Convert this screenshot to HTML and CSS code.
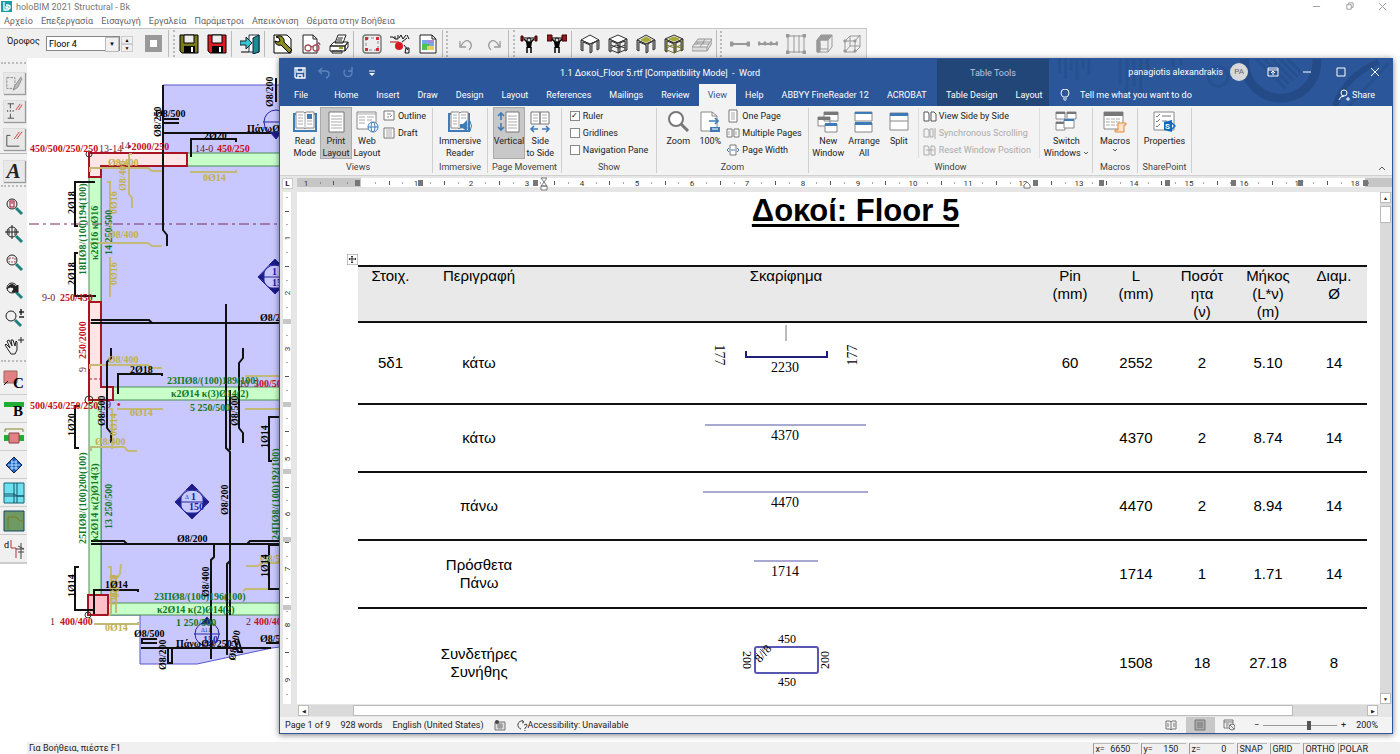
FILE: index.html
```html
<!DOCTYPE html>
<html lang="el">
<head>
  <meta charset="UTF-8" />
  <meta name="viewport" content="width=device-width, initial-scale=1.0"/>
  <title>holoBIM 2021 Structural - Bk</title>
  <link rel="stylesheet" href="styles.css">
</head>
<body>
  <div class="app">
    <div class="app-title">
      <svg class="app-logo" viewBox="0 0 11 11"><rect width="11" height="11" fill="#13a0a6"/><path d="M3 1v8h4l2-2V5L7 4H5M5 6h2v1H5z" fill="none" stroke="#fff" stroke-width="1.3"/></svg>
      <span>holoBIM 2021 Structural - Bk</span>
      <div class="app-controls">
        <button aria-label="Minimize"><svg viewBox="0 0 10 10"><path d="M1 5h8"/></svg></button>
        <button aria-label="Restore"><svg viewBox="0 0 10 10"><path d="M2 3h5v5H2zM4 3V1h5v5H7"/></svg></button>
        <button aria-label="Close"><svg viewBox="0 0 10 10"><path d="M1 1l8 8M9 1L1 9"/></svg></button>
      </div>
    </div>
    <nav class="app-menu">
      <a href="#">Αρχείο</a><a href="#">Επεξεργασία</a><a href="#">Εισαγωγή</a><a href="#">Εργαλεία</a><a href="#">Παράμετροι</a><a href="#">Απεικόνιση</a><a href="#">Θέματα στην Βοήθεια</a>
    </nav>

    <div class="toolbar">
      <div class="floor-box">
        <label for="floor">Όροφος</label>
        <span class="drop"><select id="floor"><option>Floor 4</option></select></span>
        <div class="spin"><button aria-label="Up">▲</button><button aria-label="Down">▼</button></div>
        <button class="grey-btn" aria-label="Stop"></button>
      </div>
      <i class="grip"></i>
      <button aria-label="Save"><svg viewBox="0 0 20 20"><path d="M1 1h18v18H3l-2-2z" fill="#7b7b1c" stroke="#000"/><path d="M5 1h10v8H5z" fill="#eee" stroke="#000"/><path d="M5 12h11v7H5z"/><path d="M12 13h2v5h-2z" fill="#fff"/></svg></button>
      <button aria-label="Save copy"><svg viewBox="0 0 20 20"><path d="M1 1h18v18H3l-2-2z" fill="#e01c24" stroke="#000"/><path d="M5 1h10v8H5z" fill="#eee" stroke="#000"/><path d="M5 12h11v7H5z"/><path d="M12 13h2v5h-2z" fill="#fff"/></svg></button>
      <i class="sep"></i>
      <button aria-label="Exit"><svg viewBox="0 0 20 20"><path d="M9 1h10v17H9z" fill="#fff" stroke="#234"/><path d="M13 4l6-3v17l-6 2z" fill="#1a8c94" stroke="#123"/><path d="M0 7h6V3l6 6-6 6v-4H0z" fill="#3cc3cf" stroke="#123"/><path d="M1 18h8" stroke="#000"/></svg></button>
      <i class="sep"></i>
      <button aria-label="Settings"><svg viewBox="0 0 20 20"><path d="M1 1h13l4 4v14H1z" fill="#fff" stroke="#000"/><path d="M3 3l3 1 1 3-2 1-3-1c0 3 3 5 6 4l8 8 3-3-8-8C12 5 9 1 5 2z" fill="#8b8b25" stroke="#000"/></svg></button>
      <button aria-label="Preview"><svg viewBox="0 0 20 20"><path d="M2 1h10l4 4v14H2z" fill="#fff" stroke="#222"/><path d="M12 1v4h4" fill="none" stroke="#222"/><g fill="none" stroke="#a2505c" stroke-width="1.3"><circle cx="7" cy="14" r="3"/><circle cx="15" cy="14" r="3"/><path d="M10 13q1-1 2 0M15 11q3-4 4 0"/></g></svg></button>
      <button aria-label="Print"><svg viewBox="0 0 20 20" fill="#fff" stroke="#222"><path d="M1 12l4-4h14l-3 4zM1 12h15v5H1zM16 12l3-4v5l-3 4zM6 9l3-8h8l-3 8zM3 17h10v2H3z"/><path d="M9 4h5M8 6h5"/><path d="M10 14h4" stroke="#a9a31c" stroke-width="2"/></svg></button>
      <i class="sep"></i>
      <button aria-label="Section"><svg viewBox="0 0 20 20"><rect x="1" y="1" width="18" height="18" rx="3" fill="#eee" stroke="#777" stroke-width="1.4"/><rect x="4" y="4" width="12" height="12" fill="none" stroke="#888" stroke-dasharray="3 2"/><path d="M3 3h3v3H3zM14 3h3v3h-3zM3 14h3v3H3zM14 14h3v3h-3z" fill="#d32d3b"/></svg></button>
      <button aria-label="Symbols"><svg viewBox="0 0 20 20"><path d="M0 8h9" stroke="#c00"/><path d="M0 3h3l2 2M5 2v3h3V1M9 4l2-3 2 4 3-4M17 1l2 4M14 11l4 5M16 14h3v5h-4zM12 8l5-4" fill="none" stroke="#111"/><circle cx="9" cy="12" r="4" fill="#d91822"/></svg></button>
      <button aria-label="Picture"><svg viewBox="0 0 20 20"><path d="M2 1h12l4 4v14H2z" fill="#fff" stroke="#222"/><path d="M14 1v4h4" fill="none" stroke="#222"/><path d="M4 6h12v10H4z" fill="#75a7e4"/><path d="M4 10h7v6H4z" fill="#4bc256"/><path d="M9 12h7v4H9z" fill="#eccf59"/><path d="M10 6h6v3h-6z" fill="#a58be0"/></svg></button>
      <i class="grip wide"></i>
      <button aria-label="Undo"><svg viewBox="0 0 20 20" fill="none" stroke="#999" stroke-width="1.3"><path d="M5 12Q9 4 14 8q3 4-1 8M4 7v6h6"/></svg></button>
      <button aria-label="Redo"><svg viewBox="0 0 20 20" fill="none" stroke="#999" stroke-width="1.3"><path d="M15 12Q11 4 6 8q-3 4 1 8M16 7v6h-6"/></svg></button>
      <i class="grip"></i>
      <button aria-label="Analysis"><svg viewBox="0 0 20 20"><path d="M2 4h16" stroke="#000"/><path d="M2 2h2v5H2zM16 2h2v5h-2z" fill="#7b1c22" stroke="#400"/><path d="M5 5l4 4M15 5l-4 4M8 13v6M12 13v6" stroke="#000" stroke-width="1.5"/><path d="M7 8h6l-1 6H8z"/><circle cx="10" cy="6" r="2" fill="#ddd" stroke="#000"/></svg></button>
      <button aria-label="Heavy analysis"><svg viewBox="0 0 20 20"><path d="M0 4h20" stroke="#000"/><path d="M0 1h5v6H0zM15 1h5v6h-5z" fill="#8b1c22" stroke="#400"/><path d="M5 5l4 4M15 5l-4 4M8 13v6M12 13v6" stroke="#000" stroke-width="1.5"/><path d="M7 8h6l-1 6H8z"/><circle cx="10" cy="6" r="2" fill="#ddd" stroke="#000"/></svg></button>
      <i class="sep"></i>
      <button aria-label="Frame"><svg viewBox="0 0 20 20" class="cube"><path d="M1 6l9-5 9 5-9 4z" fill="#fff"/><path d="M1 6v10l2 1V8l7 3v8l2-1v-8l5-3v9l2-1V6l-9 4z" fill="#aaa"/></svg></button>
      <button aria-label="Storeys"><svg viewBox="0 0 20 20" class="cube"><path d="M1 5l9-4 9 4-9 4z" fill="#fff"/><path d="M1 5v12l2 1V7l7 3v9l2-1V9l5-2v10l2-1V5l-9 4z" fill="#aaa"/><path d="M3 11l7 3 7-3M3 16l7 3 7-3M3 14l5-3 9 3"/></svg></button>
      <button aria-label="Slab frame"><svg viewBox="0 0 20 20" class="cube"><path d="M1 6l9-5 9 5-9 4z" fill="#ddd"/><path d="M5 6l5-3 5 3-5 2z" fill="#a6a832" stroke="#a6a832"/><path d="M1 6v10l2 1V8l7 3v8l2-1v-8l5-3v9l2-1V6l-9 4z" fill="#aaa"/></svg></button>
      <button aria-label="Slab storeys"><svg viewBox="0 0 20 20" class="cube"><path d="M1 5l9-4 9 4-9 4z" fill="#ddd"/><path d="M5 5l5-2 5 2-5 2z" fill="#a6a832" stroke="#a6a832"/><path d="M1 5v12l2 1V7l7 3v9l2-1V9l5-2v10l2-1V5l-9 4z" fill="#aaa84f"/><path d="M3 11l7 3 7-3M3 16l7 3 7-3M3 14l5-3 9 3" stroke="#77762a"/></svg></button>
      <button aria-label="Foundation"><svg viewBox="0 0 20 20" fill="#ddd" stroke="#999"><path d="M0 13L6 5h14l-5 8zM0 13v4h15l5-8V5M15 13v4M2 10h15M4 8h14M8 13l5-8M5 10l1-2M11 10l1-2"/></svg></button>
      <i class="grip wide"></i>
      <button aria-label="Beam"><svg viewBox="0 0 20 20" class="dim"><path d="M1 10h18" stroke-width="2"/><path d="M0 8h3v4H0zM17 8h3v4h-3z" fill="#999"/></svg></button>
      <button aria-label="Split beam"><svg viewBox="0 0 20 20" class="dim"><path d="M1 10h18" stroke-width="2"/><path d="M0 8h2v3H0zM6 8h2v3H6zM12 8h2v3h-2zM18 8h2v3h-2z" fill="#999"/></svg></button>
      <button aria-label="Bays"><svg viewBox="0 0 20 20" class="dim"><path d="M1 2h18M1 18h18M2 1v18M8 1v18M13 1v18M18 1v18"/><path d="M0 0h3v3H0zM17 0h3v3h-3zM0 17h3v3H0zM17 17h3v3h-3z" fill="#999"/></svg></button>
      <button aria-label="Solid"><svg viewBox="0 0 20 20" class="dim"><path d="M3 6h11v12H3zM14 6l4-5v12l-4 5M6 9v6h8"/><path d="M3 6l4-5h11l-4 5zM3 6h3v12H3z" fill="#999"/></svg></button>
      <button aria-label="Wire"><svg viewBox="0 0 20 20" class="dim"><path d="M3 7h10v11H3zM13 7l5-6v12l-5 5M3 7l5-5h10M8 2v10l-5 6M8 12h10"/><path d="M2 6h2v2H2zM12 6h2v2h-2zM2 16h2v2H2zM12 16h2v2h-2z" fill="#999"/></svg></button>
    </div>

    <div class="work">
      <div class="side-tools">
        <i class="hgrip"></i>
        <button class="raised" aria-label="Edit element"><svg viewBox="0 0 20 20" fill="none" stroke="#888"><path d="M2 4h9v12H2z" stroke-dasharray="3 1"/><path d="M18 3l-7 10-2 5 5-3 5-10" fill="#bbb"/></svg></button>
        <button class="raised" aria-label="Edit dimension"><svg viewBox="0 0 20 20" fill="none" stroke="#444"><path d="M3 2h7M6 2v5M3 18h7M6 13v5M3 9v2M6 9v2M9 9v2"/><path d="M12 9l5-7M15 9l4-6" stroke="#c33"/></svg></button>
        <button class="raised" aria-label="Edit line"><svg viewBox="0 0 20 20" fill="none" stroke="#444"><path d="M2 6v12h14M2 6h4"/><path d="M10 10l6-8M13 10l6-8" stroke="#c33"/></svg></button>
        <i class="hsep"></i>
        <button class="raised letter" aria-label="Text"><b>A</b></button>
        <i class="hgrip"></i>
        <button aria-label="Zoom page"><svg viewBox="0 0 20 20" class="lens"><path d="M12 12l6 6" class="handle"/><circle cx="8" cy="8" r="5"/><path d="M6 5h4v6H6zM7 7h2" stroke="#a02"/></svg></button>
        <button aria-label="Zoom all"><svg viewBox="0 0 20 20" class="lens"><path d="M12 12l6 6" class="handle"/><circle cx="8" cy="8" r="5"/><path d="M1 8h14M8 1v14M5 5v6M11 5v6" /></svg></button>
        <button aria-label="Zoom window"><svg viewBox="0 0 20 20" class="lens"><path d="M12 12l6 6" class="handle"/><circle cx="8" cy="8" r="5"/><path d="M5 6h6v4H5z" stroke="#a56" stroke-dasharray="2 1"/></svg></button>
        <button aria-label="Zoom previous"><svg viewBox="0 0 20 20" class="lens"><path d="M12 12l6 6" class="handle"/><circle cx="8" cy="8" r="5"/><path d="M3 9q4-8 9-2l2-2v7H8l2-3Q7 5 3 9" fill="#222"/></svg></button>
        <button aria-label="Zoom in or out"><svg viewBox="0 0 20 20" class="lens"><path d="M11 12l6 6" class="handle"/><circle cx="7" cy="8" r="5"/><path d="M15 4h5M17 1v6M15 9h5" stroke-width="1.5"/></svg></button>
        <button aria-label="Pan"><svg viewBox="0 0 20 20" class="lens"><path d="M3 12l-2-3 1-1 4 4-3-7 2-1 3 6-1-6h2l2 6 1-5 1 1v8l-2 4H7zM14 4h6M17 1v6"/></svg></button>
        <i class="hgrip"></i>
        <button class="flat" aria-label="Column"><svg viewBox="0 0 20 20"><path d="M0 0h13v12H0z" fill="#e28084" stroke="#965"/><path d="M0 14l4-4" stroke="#000"/><text x="9" y="17" class="tool-letter">C</text></svg></button>
        <button class="flat" aria-label="Beam tool"><svg viewBox="0 0 20 20"><path d="M0 3h20v5H0z" fill="#1fae33"/><text x="9" y="17" class="tool-letter">B</text></svg></button>
        <button class="flat" aria-label="Joint"><svg viewBox="0 0 20 20"><path d="M1 5V2h18v3" fill="none" stroke="#88852c"/><path d="M0 8h20v6H0z" fill="#1fae33"/><path d="M5 6h10v10H5z" fill="#e28084" stroke="#844"/></svg></button>
        <button class="flat" aria-label="Slab"><svg viewBox="0 0 20 20"><path d="M10 2l8 8-8 8-8-8z" fill="#1c63c4" stroke="#124"/><path d="M7 7h6M6 13h8M8 5v10M12 5v10M4 10h12" stroke="#b9dcff"/></svg></button>
        <button class="flat" aria-label="Grid"><svg viewBox="0 0 20 20"><path d="M0 0h20v20H0z" fill="#6fe0ef" stroke="#167"/><path d="M10 0v20M13 0v20M0 11h10l3 2h7M0 13h20" fill="none" stroke="#156"/></svg></button>
        <button class="flat" aria-label="Outline"><svg viewBox="0 0 20 20"><path d="M0 0h20v20H0z" fill="#6f9a64" stroke="#146"/><path d="M4 18V6h8l4 4h4" fill="none" stroke="#7b7a1e"/></svg></button>
        <button class="flat" aria-label="Levels"><svg viewBox="0 0 20 20"><text x="0" y="9" font-size="9">d</text><path d="M7 1v8h5v10" fill="none" stroke="#b33"/><path d="M12 10h8M17 4v16M14 7l6 3M14 13h6" fill="none" stroke="#444"/></svg></button>
      </div>

      <!-- floor plan -->
      <div class="plan">
        <svg viewBox="27 58 260 684" width="260" height="684">
          <path class="slab" d="M163 85H288V646L272 648 197 664H140V615H101V166H163z"/>
          <path class="beam" d="M187 153h101v13H187zM89 177h12v424H89zM113 387h175v13H113zM108 603h180v12H108z"/>
          <path class="wall" d="M89 153h98v13h-86v11H89zM89 302h12v85h12v13H89z"/>
          <path d="M89 323h12M89 379h12" stroke="#a02030" stroke-dasharray="3 2"/>
          <path class="col" d="M88 595h20v20H88z"/>
          <path d="M29 224H288" stroke="#7a2c5c" stroke-dasharray="10 4 3 4"/>
          <g class="mark"><circle cx="89" cy="154" r="3"/><circle cx="89" cy="400" r="4"/><circle cx="88" cy="615" r="3"/></g>
          <path class="soft" d="M90 172v-4h58l4 3h10M129 154h3M129 154v40l3 4v10M191 171v1h45v-2M107 182h3v47M90 243h58l4 3h10M110 257v40M90 369v-4h58l4 3h10M91 451v-4h33l4 4h9M109 409h3v40M117 409h46M94 624h44v-2M108 567h3v46l-2 3M121 564l-1 10-4 4v35M245 376h35M245 409h35M246 566h12l4-3h20M243 591l3-2h35"/>
          <path class="bar" d="M163 85V230l4 5v11M163 133H288M163 119h16M163 123h16M276 78v24M191 157v-18h45v3M95 182H75v44h3M78 253h-3v43h21M79 406h-4v42h4M79 567h-4v43h20M94 614v-24h44v2M91 323H288M91 320h58l3 3M226 304v144l4 4v163M230 390v60M111 348v10l-4 4v66l4 5v10M243 348v10l-4 5v65l4 5v10M118 394v-20h44v2M280 417h-11v44h3M91 544H288M91 541h33l3 3M247 544l3-3h32M282 545h-13v44h13M214 545v12l-3 3v99M230 561l-3 3v91M141 648h130M157 639h-15v4h15M168 649v14h4v-14M235 640l3 12h4l-4-13M266 643h20"/>

          <g class="section"><path d="M192 484l17 18-17 17-17-17z"/><circle cx="192" cy="502" r="12"/><path d="M175 502h34"/><path class="fill" d="M192 484l6 6h-12zM175 502l6-5v10zM209 502l-6-5v10zM192 519l-6-6h12z"/></g>
          <g class="section"><path d="M275 259l17 18-17 17-17-17z"/><circle cx="275" cy="277" r="12"/><path d="M258 277h34"/><path class="fill" d="M275 259l6 6h-12zM258 277l6-5v10zM275 294l-6-6h12z"/></g>
          <g class="section"><circle cx="207" cy="634" r="12"/><path d="M194 634h26"/><path class="fill" d="M207 617l6 7h-12z"/></g>
          <g class="section"><circle cx="276" cy="122" r="12"/><path d="M263 122h26"/><path class="fill" d="M276 139l-6-7h12z"/></g>

          <g class="t red">
            <text x="30" y="152">450/500/250/250</text><text x="128" y="150">•2000/250</text><text x="217" y="152">450/250</text>
            <text x="60" y="301">250/450</text><text x="30" y="409">500/450/250/250</text><text x="117" y="408">•</text><text x="254" y="387">500/500</text>
            <text x="60" y="625">400/400</text><text x="254" y="625">400/400</text>
            <text transform="translate(86 359) rotate(-90)">250/2000</text>
          </g>
          <g class="t thin">
            <text x="99" y="152">13-14</text><text x="120" y="149">14</text><text x="195" y="152">14-0</text><text x="42" y="301">9-0</text><text x="106" y="408">9</text><text x="239" y="387">10</text><text x="50" y="625">1</text><text x="246" y="625">2</text>
            <text transform="translate(86 372) rotate(-90)">9</text>
          </g>
          <g class="t green">
            <text x="167" y="384">23ΠØ8/(100)189(100)</text><text x="171" y="397">κ2Ø14 κ(3)Ø14(2)</text><text x="190" y="411">5 250/500</text>
            <text x="154" y="600">23ΠØ8/(100)196(100)</text><text x="157" y="613">κ2Ø14 κ(2)Ø14(2)</text><text x="176" y="626">1 250/500</text>
            <text transform="translate(86 275) rotate(-90)">18ΠØ8/(100)194(100)</text>
            <text transform="translate(98 260) rotate(-90)">κ2Ø16 κØ16</text>
            <text transform="translate(112 255) rotate(-90)">14 250/500</text>
            <text transform="translate(86 544) rotate(-90)">25ΠØ8/(100)200(100)</text>
            <text transform="translate(98 541) rotate(-90)">κ2Ø14 κ(2)Ø14(3)</text>
            <text transform="translate(112 529) rotate(-90)">13 250/500</text>
            <text transform="translate(279 540) rotate(-90)">24ΠØ8/(100)192(100)</text>
          </g>
          <g class="t yellow">
            <text x="108" y="166">Ø8/400</text><text x="203" y="181">0Ø14</text><text x="108" y="238">Ø8/400</text><text x="108" y="363">Ø8/400</text><text x="130" y="416">0Ø14</text><text x="95" y="445">Ø8/400</text><text x="105" y="631">0Ø14</text><text x="260" y="562">Ø8/5</text>
            <text transform="translate(126 191) rotate(-90)">Ø8/400</text><text transform="translate(117 214) rotate(-90)">0Ø16</text><text transform="translate(117 285) rotate(-90)">0Ø16</text><text transform="translate(117 436) rotate(-90)">0Ø14</text><text transform="translate(117 605) rotate(-90)">Ø8/400</text><text transform="translate(119 598) rotate(-90)">0Ø14</text>
          </g>
          <g class="t">
            <text x="155" y="117">Ø8/500</text><text x="247" y="132">ΠάνωØ8</text><text x="204" y="139">2Ø20</text><text x="260" y="321">Ø8/200</text><text x="130" y="373">2Ø18</text><text x="177" y="542">Ø8/200</text><text x="105" y="588">1Ø14</text><text x="134" y="637">Ø8/500</text><text x="176" y="647">ΠάνωØ8/250</text><text x="260" y="642">Ø8/500</text>
            <text transform="translate(161 137) rotate(-90)">Ø8/250</text><text transform="translate(273 107) rotate(-90)">Ø8/200</text>
            <text transform="translate(75 214) rotate(-90)">2Ø18</text><text transform="translate(75 285) rotate(-90)">2Ø18</text><text transform="translate(75 436) rotate(-90)">1Ø20</text><text transform="translate(75 597) rotate(-90)">1Ø14</text>
            <text transform="translate(105 426) rotate(-90)">Ø8/500</text><text transform="translate(238 426) rotate(-90)">Ø8/500</text><text transform="translate(268 448) rotate(-90)">1Ø14</text><text transform="translate(228 515) rotate(-90)">Ø8/200</text><text transform="translate(268 577) rotate(-90)">1Ø14</text><text transform="translate(209 597) rotate(-90)">Ø8/400</text><text transform="translate(166 670) rotate(-90)">Ø8/200</text><text transform="translate(235 661) rotate(-80)">Ø8/200</text>
          </g>
          <g class="t blue"><text x="191" y="500">1</text><text x="189" y="510">150</text><text x="272" y="275">1</text><text x="272" y="286">15</text><text x="203" y="643">150</text><text x="185" y="499" class="tiny">Δ</text><text x="201" y="632" class="tiny">Δ11</text></g>
        </svg>
      </div>
    </div>

    <div class="app-status">
      <span class="hint">Για Βοήθεια, πιέστε F1</span>
      <span class="cell coord"><span>x=</span><span>6650</span></span><span class="cell coord"><span>y=</span><span>150</span></span><span class="cell coord"><span>z=</span><span>0</span></span>
      <span class="cell">SNAP</span><span class="cell">GRID</span><span class="cell">ORTHO</span><span class="cell">POLAR</span>
    </div>
  </div>

  <div class="word">
    <div class="word-head">
      <svg class="head-art" viewBox="0 0 340 48" fill="none"><g stroke="#26508f" stroke-width="3"><path d="M4 0v14M10 0v20M16 0v12M22 0v22M28 0v10M34 0v16M66 0v26M73 0v36M80 0v28M87 0v38M94 0v18M120 0v8M128 0v6"/><circle cx="166" cy="18" r="10"/></g><circle cx="230" cy="3" r="37" stroke="#244b87" stroke-width="9"/><path d="M205 0l30 30M213 0l25 25M221 0l22 22M229 0l18 18M237 0l14 14M300 48l40-44" stroke="#26508f" stroke-width="3"/><path d="M285 48q12-32 45-45" stroke="#244b87" stroke-width="6"/></svg>
      <div class="title-row">
        <div class="qat">
          <button aria-label="Save"><svg viewBox="0 0 12 12"><path d="M1 1h10v10H2l-1-1zM3 1v4h6V1M4 11V8h4v3" fill="none" stroke="#fff" stroke-width="1.3"/></svg></button>
          <button aria-label="Undo" class="off"><svg viewBox="0 0 12 12"><path d="M4 1L1 4l3 3M1 4h6q4 0 4 3t-3 4" fill="none" stroke="#8fb0e4" stroke-width="1.4"/></svg></button>
          <button aria-label="Redo" class="off"><svg viewBox="0 0 12 12"><path d="M3 3a4 4 0 1 0 6 0M10 0v4H6" fill="none" stroke="#8fb0e4" stroke-width="1.4"/></svg></button>
          <button aria-label="Customize"><svg viewBox="0 0 12 12"><path d="M3 4h6" stroke="#fff"/><path d="M3 6h6L6 9z" fill="#fff"/></svg></button>
        </div>
        <span class="doc-name">1.1 Δοκοί_Floor 5.rtf [Compatibility Mode]&nbsp; - &nbsp;Word</span>
      </div>
      <div class="tools-label">Table Tools</div>
      <div class="user-row">
        <span>panagiotis alexandrakis</span><span class="avatar">PA</span>
        <button aria-label="Ribbon options"><svg viewBox="0 0 12 12"><path d="M1 2h10v8H1zM1 4h10M6 9V6M4 7l2-2 2 2"/></svg></button>
        <button aria-label="Minimize"><svg viewBox="0 0 12 12"><path d="M2 6h8"/></svg></button>
        <button aria-label="Maximize"><svg viewBox="0 0 12 12"><path d="M2 2h8v8H2z"/></svg></button>
        <button aria-label="Close"><svg viewBox="0 0 12 12"><path d="M2 2l8 8M10 2l-8 8"/></svg></button>
      </div>
      <nav class="tabs">
        <a href="#" class="file">File</a><a href="#">Home</a><a href="#">Insert</a><a href="#">Draw</a><a href="#">Design</a><a href="#">Layout</a><a href="#">References</a><a href="#">Mailings</a><a href="#">Review</a><a href="#" class="active">View</a><a href="#">Help</a><a href="#">ABBYY FineReader 12</a><a href="#">ACROBAT</a>
      </nav>
      <nav class="tabs context"><a href="#">Table Design</a><a href="#">Layout</a></nav>
      <div class="tell-row">
        <svg viewBox="0 0 12 12" class="bulb"><path d="M4 8Q2 6 2 4a4 4 0 0 1 8 0q0 2-2 4zM4 10h4M5 12h2"/></svg>
        <a href="#">Tell me what you want to do</a>
        <a href="#" class="share"><svg viewBox="0 0 12 12"><circle cx="6" cy="4" r="3"/><path d="M1 11q1-4 5-4M8 10h4M10 8v4"/></svg>Share</a>
      </div>
    </div>

    <div class="ribbon">
      <section class="group views">
        <div class="items">
          <button class="big"><svg viewBox="0 0 24 22"><path d="M3 3H1v17h22V3h-2" fill="none" stroke="#3e7cb9" stroke-width="2"/><path d="M3 1h8l1 1 1-1h8v16h-8l-1 1-1-1H3z" fill="#fff" stroke="#888"/><path d="M12 2v16M5 4h5M5 7h5M5 10h5M5 13h5M14 10h5M14 13h5" stroke="#aaa"/><path d="M14 3h5v5h-5z" fill="#3e7cb9"/></svg>Read<br>Mode</button>
          <button class="big on"><svg viewBox="0 0 24 22"><path d="M5 1h15v20H5z" fill="#fff" stroke="#777"/><path d="M7 5h11M7 8h11M7 11h11M7 14h11M7 17h11" stroke="#aaa"/></svg>Print<br>Layout</button>
          <button class="big"><svg viewBox="0 0 24 22"><path d="M2 1h19v17H2z" fill="#fff" stroke="#888"/><path d="M2 3h19M4 6h6M4 9h6M4 12h6M12 6h7M12 9h5" stroke="#aaa"/><g fill="#fff" stroke="#3e7cb9"><circle cx="18" cy="16" r="5"/><ellipse cx="18" cy="16" rx="2" ry="5"/><path d="M13 16h10"/></g></svg>Web<br>Layout</button>
          <div class="stack">
            <button><svg viewBox="0 0 12 12"><path d="M1 1h10v9H1z" fill="#fff" stroke="#777"/><path d="M4 4h4M4 7h2M7 7l2-2" stroke="#888"/></svg>Outline</button>
            <button><svg viewBox="0 0 12 12"><path d="M1 1h10v10H1z" fill="#fff" stroke="#777"/><path d="M3 3h6M3 5h6M3 7h6M3 9h6" stroke="#aaa"/></svg>Draft</button>
          </div>
        </div>
        <h3>Views</h3>
      </section>
      <section class="group immersive">
        <div class="items"><button class="big"><svg viewBox="0 0 24 22"><path d="M3 3H1v17h20V3h-1" fill="none" stroke="#3e7cb9" stroke-width="2"/><path d="M3 1h8l1 1 1-1h7v16h-8l-1 1-1-1H3z" fill="#fff" stroke="#888"/><path d="M11 2v15M5 4h4M5 7h4M5 10h4M5 13h4M13 4h5M13 7h5" stroke="#aaa"/><path d="M12 13h3l4-4v12l-4-4h-3z" fill="#3e7cb9"/><path d="M20 12q2 3 0 6M22 10q3 5 0 10" fill="none" stroke="#3e7cb9"/></svg>Immersive<br>Reader</button></div>
        <h3>Immersive</h3>
      </section>
      <section class="group movement">
        <div class="items">
          <button class="big on"><svg viewBox="0 0 24 22"><path d="M9 1h13v20H9z" fill="#fff" stroke="#777"/><path d="M11 5h9M11 8h9M11 11h9M11 14h9M11 17h9" stroke="#aaa"/><path d="M4 2v7M1 5l3-3 3 3M4 12v7M1 16l3 3 3-3" fill="none" stroke="#3e7cb9" stroke-width="1.6"/></svg>Vertical</button>
          <button class="big"><svg viewBox="0 0 24 22"><path d="M3 1h9v12H3zM12 1h9v12h-9z" fill="#fff" stroke="#777"/><path d="M5 4h5M5 7h5M5 10h5M14 4h5M14 7h5M14 10h5" stroke="#aaa"/><path d="M3 18h7M6 15l-3 3 3 3M14 18h7M18 15l3 3-3 3" fill="none" stroke="#3e7cb9" stroke-width="1.6"/></svg>Side<br>to Side</button>
        </div>
        <h3>Page Movement</h3>
      </section>
      <section class="group show">
        <div class="items stack checks">
          <label><input type="checkbox" checked>Ruler</label>
          <label><input type="checkbox">Gridlines</label>
          <label><input type="checkbox">Navigation Pane</label>
        </div>
        <h3>Show</h3>
      </section>
      <section class="group zoom">
        <div class="items">
          <button class="big"><svg viewBox="0 0 24 22"><circle cx="10" cy="8" r="7" fill="#fff" stroke="#777" stroke-width="2"/><path d="M15 13l7 7" stroke="#777" stroke-width="3"/></svg>Zoom</button>
          <button class="big"><svg viewBox="0 0 24 22"><path d="M3 1h11l5 4v15H3z" fill="#fff" stroke="#888"/><path d="M14 1v4h5" fill="none" stroke="#888"/><path d="M11 10h9M17 7l3 3-3 3" fill="none" stroke="#3e7cb9" stroke-width="1.6"/><path d="M12 16h10v5H12z" fill="#3e7cb9"/><path d="M14 18h6" stroke="#fff"/></svg>100%</button>
          <div class="stack">
            <button><svg viewBox="0 0 12 12"><path d="M2 0h8v12H2z" fill="#fff" stroke="#777"/><path d="M4 3h4M4 5h4M4 7h4M4 9h4" stroke="#aaa"/></svg>One Page</button>
            <button><svg viewBox="0 0 12 12"><path d="M0 2h5v8H0zM7 2h5v8H7z" fill="#fff" stroke="#777"/><path d="M2 4v4M9 4v4" stroke="#aaa"/></svg>Multiple Pages</button>
            <button><svg viewBox="0 0 12 12"><path d="M3 1h6v10H3z" fill="#fff" stroke="#777"/><path d="M2 4L0 6l2 2M10 4l2 2-2 2M4 6h4" fill="none" stroke="#3e7cb9"/></svg>Page Width</button>
          </div>
        </div>
        <h3>Zoom</h3>
      </section>
      <section class="group window">
        <div class="items">
          <button class="big"><svg viewBox="0 0 24 22"><g fill="#fff" stroke="#888"><path d="M8 1h14v9H8zM2 6h12v9H2z"/></g><path d="M8 1h14v3H8zM2 6h12v3H2z" fill="#777"/><path d="M9 13h12v8H9z" fill="#fff" stroke="#888"/><path d="M9 12h12v3H9z" fill="#3e7cb9"/></svg>New<br>Window</button>
          <button class="big"><svg viewBox="0 0 24 22"><path d="M3 1h17v9H3zM3 12h17v9H3z" fill="#fff" stroke="#888"/><path d="M3 1h17v2H3zM3 11h17v3H3z" fill="#3e7cb9"/></svg>Arrange<br>All</button>
          <button class="big"><svg viewBox="0 0 24 22"><path d="M3 2h18v17H3z" fill="#fff" stroke="#888"/><path d="M3 10h18" stroke="#888"/><path d="M3 2h18v3H3z" fill="#3e7cb9"/></svg>Split</button>
          <div class="stack ruled">
            <button><svg viewBox="0 0 12 12"><path d="M0 2h4l1 2v7H0zM7 2h3l2 2v7H7z" fill="#fff" stroke="#555"/></svg>View Side by Side</button>
            <button disabled><svg viewBox="0 0 12 12"><path d="M0 2h4l1 2v6H0zM6 2h3v8H6zM11 1v11" fill="none" stroke="#aaa"/></svg>Synchronous Scrolling</button>
            <button disabled><svg viewBox="0 0 12 12"><path d="M0 2h4l1 2v7H0zM7 2h3l1 2v7H7zM2 6h8" fill="none" stroke="#aaa"/></svg>Reset Window Position</button>
          </div>
          <button class="big"><svg viewBox="0 0 24 22"><path d="M2 1h9v7H2zM13 1h9v7h-9zM2 11h9v8H2z" fill="#fff" stroke="#888"/><path d="M2 1h9v2H2zM13 1h9v2h-9zM2 11h8v2H2z" fill="#777"/><path d="M10 9h10v8H10z" fill="#fff" stroke="#888"/><path d="M10 8h10v2H10z" fill="#3e7cb9"/></svg>Switch<br><span>Windows <svg class="chev" viewBox="0 0 6 6"><path d="M1 2l2 2 2-2"/></svg></span></button>
        </div>
        <h3>Window</h3>
      </section>
      <section class="group macros">
        <div class="items"><button class="big"><svg viewBox="0 0 24 22"><path d="M1 1h19v17H1z" fill="#fff" stroke="#888"/><path d="M1 1h19v4H1z" fill="#777"/><path d="M3 8h15M3 11h15M3 14h15" stroke="#aaa" stroke-dasharray="4 1"/><path d="M15 12h8v2h-2v7h-9v-2h3z" fill="#fbe3cb" stroke="#e08a3c"/></svg>Macros<br><svg class="chev" viewBox="0 0 6 6"><path d="M1 2l2 2 2-2"/></svg></button></div>
        <h3>Macros</h3>
      </section>
      <section class="group sharepoint">
        <div class="items"><button class="big"><svg viewBox="0 0 24 22"><path d="M2 1h20v18H2z" fill="#fff" stroke="#888"/><path d="M4 5l1 1 3-3M4 10l1 1 3-3M4 15l1 1 3-3M10 5h9M10 10h5" fill="none" stroke="#777"/><path d="M12 11l8-2v12l-8-2z" fill="#0b6cbd"/><path d="M20 12l3 3-3 3" fill="none" stroke="#0b6cbd" stroke-width="1.5"/><text x="13" y="18" font-size="8" font-weight="bold" fill="#fff">S</text></svg>Properties</button></div>
        <h3>SharePoint</h3>
      </section>
      <button class="collapse" aria-label="Collapse ribbon"><svg viewBox="0 0 10 10"><path d="M2 7l3-3 3 3" fill="none" stroke="#555"/></svg></button>
    </div>

    <div class="ruler-row">
      <span class="tab-stop">L</span>
      <svg id="hruler" height="16"></svg>
    </div>

    <div class="doc-area">
      <svg id="vruler" width="10"></svg>
      <div class="page">
        <h1>Δοκοί: Floor 5</h1>
        <div class="table-wrap">
          <svg class="move" viewBox="0 0 11 11"><path d="M0 0h11v11H0z" fill="#fff" stroke="#888"/><path d="M5 2v7M2 5h7M4 3l1-1 1 1M4 8l1 1 1-1M3 4L2 5l1 1M8 4l1 1-1 1" fill="none" stroke="#333"/></svg>
          <table>
            <colgroup><col class="c-id"><col class="c-desc"><col class="c-sketch"><col class="c-num"><col class="c-num"><col class="c-num"><col class="c-num"><col class="c-num"></colgroup>
            <thead>
              <tr><th>Στοιχ.</th><th>Περιγραφή</th><th>Σκαρίφημα</th><th>Pin<br>(mm)</th><th>L<br>(mm)</th><th>Ποσότ<br>ητα<br>(ν)</th><th>Μήκος<br>(L*ν)<br>(m)</th><th>Διαμ.<br>Ø</th></tr>
            </thead>
            <tbody>
              <tr class="first"><td>5δ1</td><td>κάτω</td>
                <td><svg class="sketch" viewBox="0 0 200 76" width="200" height="76"><path d="M100 0v16" stroke="#777"/><path d="M60 26v6h81v-6" class="steel thick"/><text x="99" y="47">2230</text><text transform="translate(29 30) rotate(90)">177</text><text transform="translate(171 30) rotate(-90)">177</text></svg></td>
                <td>60</td><td>2552</td><td>2</td><td>5.10</td><td>14</td></tr>
              <tr><td></td><td>κάτω</td>
                <td><svg class="sketch" viewBox="0 0 200 60" width="200" height="60"><path d="M19 17h161" class="steel"/><text x="99" y="32">4370</text></svg></td>
                <td></td><td>4370</td><td>2</td><td>8.74</td><td>14</td></tr>
              <tr><td></td><td>πάνω</td>
                <td><svg class="sketch" viewBox="0 0 200 60" width="200" height="60"><path d="M17 16h165" class="steel"/><text x="99" y="31">4470</text></svg></td>
                <td></td><td>4470</td><td>2</td><td>8.94</td><td>14</td></tr>
              <tr><td></td><td>Πρόσθετα<br>Πάνω</td>
                <td><svg class="sketch" viewBox="0 0 200 60" width="200" height="60"><path d="M68 17h64" class="steel"/><text x="99" y="32">1714</text></svg></td>
                <td></td><td>1714</td><td>1</td><td>1.71</td><td>14</td></tr>
              <tr class="last"><td></td><td>Συνδετήρες<br>Συνήθης</td>
                <td><svg class="sketch" viewBox="0 0 200 80" width="200" height="80"><rect x="69" y="24" width="63" height="26" rx="2" class="stirrup"/><path d="M70 30l7 7M74 26l7 7" class="steel"/><text x="101" y="20" class="small">450</text><text x="101" y="63" class="small">450</text><text transform="translate(57 37) rotate(90)" class="small">200</text><text transform="translate(143 37) rotate(-90)" class="small">200</text><text transform="translate(80 33) rotate(-50)" class="small">8//8</text></svg></td>
                <td></td><td>1508</td><td>18</td><td>27.18</td><td>8</td></tr>
            </tbody>
          </table>
        </div>
      </div>
      <div class="vscroll"><button aria-label="Scroll up">▲</button><span class="thumb"></span><button aria-label="Scroll down">▼</button></div>
    </div>
    <div class="hscroll"><button aria-label="Scroll left">◀</button><span class="track"><span class="thumb"></span></span><button aria-label="Scroll right">▶</button></div>

    <div class="word-status">
      <span>Page 1 of 9</span><span>928 words</span><span>English (United States)</span>
      <svg viewBox="0 0 12 12"><path d="M1 3h10v8H1z" fill="#ddd" stroke="#777"/><path d="M3 6h6M3 8h6M5 4v6M7 4v6" stroke="#888"/><circle cx="3" cy="3" r="2" fill="#444"/></svg>
      <span class="access"><svg viewBox="0 0 12 12"><path d="M7 2a4 4 0 1 0-2 8M6 1l2 2-2 1M8 6q3-2 3 0t-2 3v1M9 11v1" fill="none" stroke="#444"/></svg>Accessibility: Unavailable</span>
      <div class="view-buttons">
        <button aria-label="Read mode"><svg viewBox="0 0 12 12"><path d="M1 2h4l1 1 1-1h4v8H7l-1 1-1-1H1zM6 3v8M3 4v4M9 4v4" fill="none" stroke="#777"/></svg></button>
        <button aria-label="Print layout" class="on"><svg viewBox="0 0 12 12"><path d="M1 1h10v10H1z" fill="#aaa" stroke="#777"/><path d="M3 4h6M3 6h6M3 8h6" stroke="#777"/></svg></button>
        <button aria-label="Web layout"><svg viewBox="0 0 12 12"><path d="M1 1h9v8H1zM1 3h9M3 5h3M3 7h2" fill="none" stroke="#777"/><circle cx="9" cy="8" r="3" fill="#eee" stroke="#777"/><path d="M7 6l4 4" stroke="#777"/></svg></button>
      </div>
      <div class="zoom-ctl"><span>−</span><input type="range" min="0" max="100" value="63" aria-label="Zoom level"><span>+</span></div>
      <span class="percent">200%</span>
    </div>
  </div>
  <script src="ruler.js"></script>
</body>
</html>
```
FILE: styles.css
```css
* {
  box-sizing: border-box;
}

body {
  margin: 0;
  height: 100vh;
  overflow: hidden;
  background: #fff;
  font-family: Roboto, "Noto Sans", sans-serif;
  font-size: 9px;
  color: #222;
}

button {
  font: inherit;
  color: inherit;
  background: none;
  border: 0;
  padding: 0;
}

a {
  color: inherit;
  text-decoration: none;
}

i {
  display: block;
}

/* CAD application behind */
.app {
  display: flex;
  flex-direction: column;
  height: 100vh;
}

.app-title {
  display: flex;
  align-items: center;
  height: 13px;
  padding-left: 1px;
  gap: 4px;
  color: #777;
}

.app-logo {
  width: 11px;
  height: 11px;
}

.app-controls {
  margin-left: auto;
  display: flex;
  gap: 24px;
  padding-right: 13px;
}

.app-controls svg {
  display: block;
  width: 9px;
  height: 9px;
  fill: none;
  stroke: #999;
}

.app-menu {
  display: flex;
  align-items: center;
  gap: 8px;
  height: 15px;
  padding-left: 4px;
  color: #666;
}

.toolbar {
  display: flex;
  align-items: center;
  align-self: flex-start;
  height: 30px;
  background: #f0f0f0;
  border-top: 1px solid #c4c4c4;
  border-right: 1px solid #ccc;
}

.toolbar > button {
  width: 28px;
  height: 28px;
  display: flex;
  align-items: center;
  justify-content: center;
}

.toolbar svg {
  width: 20px;
  height: 20px;
}

.cube {
  fill: none;
  stroke: #333;
}

.dim {
  fill: none;
  stroke: #999;
}

.sep {
  width: 5px;
  height: 26px;
  border-left: 1px solid #bbb;
}

.grip {
  width: 7px;
  height: 27px;
  border-left: 1px solid #bbb;
  border-right: 2px dotted #bbb;
}

.grip.wide {
  width: 10px;
  border-right: 0;
  background: radial-gradient(#bbb 1px, transparent 1px) 2px 0 / 4px 4px repeat-y;
}

.floor-box {
  display: flex;
  align-items: center;
  width: 168px;
  height: 24px;
  padding-left: 7px;
}

.floor-box label {
  width: 39px;
  padding-bottom: 6px;
  color: #111;
}

.drop {
  position: relative;
  display: flex;
}

.drop::after {
  content: "▼";
  position: absolute;
  right: 1px;
  top: 1px;
  width: 12px;
  height: 13px;
  background: #f0f0f0;
  border: 1px solid #bbb;
  font-size: 6px;
  line-height: 11px;
  text-align: center;
  color: #000;
  pointer-events: none;
}

.floor-box select {
  appearance: none;
  width: 74px;
  height: 15px;
  border: 1px solid #888;
  border-radius: 0;
  padding: 0 2px;
  background: #fff;
  font: inherit;
  color: #000;
}

.spin {
  display: flex;
  flex-direction: column;
  margin-left: 1px;
}

.spin button {
  width: 12px;
  height: 8px;
  font-size: 5px;
  line-height: 6px;
  border: 1px solid #ccc;
  color: #000;
}

.grey-btn {
  width: 17px;
  height: 17px;
  margin-left: 12px;
  border: 5px solid #999;
  background: #fff;
}

.work {
  flex: 1;
  display: flex;
  align-items: flex-start;
  min-height: 0;
}

.side-tools {
  width: 27px;
  display: flex;
  flex-direction: column;
  align-items: center;
  padding-top: 4px;
  background: #f0f0f0;
  border-bottom: 1px solid #ccc;
}

.side-tools button {
  width: 27px;
  height: 28px;
  display: flex;
  align-items: center;
  justify-content: center;
}

.side-tools svg {
  width: 20px;
  height: 20px;
  overflow: visible;
}

.side-tools .raised {
  width: 22px;
  height: 22px;
  margin: 3px 0;
  background: #e8e8e8;
  border: 1px solid #ddd;
  box-shadow: 1px 1px 1px #999;
}

.side-tools .raised svg {
  width: 18px;
  height: 18px;
  flex: none;
}

.side-tools .letter {
  font: italic 21px "Liberation Serif", serif;
  color: #222;
}

.side-tools .flat {
  border-bottom: 1px solid #ccc;
}

.tool-letter {
  font: bold 15px "Liberation Serif", serif;
}

.hgrip {
  width: 25px;
  height: 7px;
  border-top: 2px dotted #bbb;
}

.hsep {
  width: 27px;
  height: 4px;
  border-top: 1px solid #bbb;
}

.lens {
  fill: none;
  stroke: #222;
}

.lens .handle {
  stroke: #20807c;
  stroke-width: 3;
}

.plan svg {
  display: block;
}

.slab {
  fill: #c8c8ff;
  stroke: #5858c8;
}

.beam {
  fill: #c8ffc8;
  stroke: #4a8a5a;
}

.wall {
  fill: #ffe6e6;
  stroke: #a81424;
  stroke-width: 2;
}

.col {
  fill: #ffc0c8;
  stroke: #a81424;
  stroke-width: 2;
}

.mark {
  fill: none;
  stroke: #333;
}

.bar {
  fill: none;
  stroke: #111;
  stroke-width: 2;
}

.soft {
  fill: none;
  stroke: #c3ba78;
  stroke-width: 2;
}

.section {
  fill: none;
  stroke: #26269a;
}

.section .fill {
  fill: #1c1c86;
}

.t {
  font: bold 10px "Liberation Serif", serif;
  fill: #000;
}

.t.red {
  fill: #c4101c;
}

.t.thin {
  font-weight: normal;
  fill: #6c1c2c;
}

.t.green {
  fill: #107828;
}

.t.yellow {
  fill: #c0b050;
}

.t.blue {
  fill: #1c1ca0;
}

.t .tiny {
  font: 6px "Liberation Serif", serif;
}

.app-status {
  display: flex;
  align-items: flex-start;
  gap: 3px;
  height: 12px;
  margin-left: 27px;
  padding: 1px 32px 0 2px;
  background: #f0f0f0;
  line-height: 11px;
}

.app-status .hint {
  margin-right: auto;
}

.cell {
  min-width: 30px;
  padding-left: 1px;
  border-left: 1px solid #999;
  border-top: 1px solid #bbb;
  line-height: 10px;
}

.coord {
  display: flex;
  justify-content: space-between;
  width: 45px;
  padding-right: 8px;
}

/* Word window on top */
.word {
  position: absolute;
  left: 279px;
  right: 7px;
  top: 58px;
  bottom: 20px;
  display: flex;
  flex-direction: column;
  background: #e6e6e6;
  border: 1px solid #2b579a;
  box-shadow: 0 1px 6px rgba(0,0,0,0.5);
}

.word-head {
  position: relative;
  display: grid;
  grid-template-columns: 657px 112px 1fr;
  grid-template-rows: 25px 22px;
  background: #2b579a;
  color: #fff;
}

.head-art {
  position: absolute;
  right: 0;
  top: 0;
  width: 340px;
  height: 47px;
}

.title-row {
  display: flex;
  align-items: center;
  padding-top: 2px;
}

.qat {
  display: flex;
  gap: 12px;
  width: 280px;
  padding-left: 14px;
}

.qat svg {
  display: block;
  width: 12px;
  height: 12px;
}

.qat .off {
  opacity: 0.5;
}

.tools-label {
  position: relative;
  display: flex;
  align-items: center;
  justify-content: center;
  padding-top: 3px;
  background: #234679;
  color: #b8c8e0;
}

.user-row {
  position: relative;
  display: flex;
  align-items: center;
  justify-content: flex-end;
  gap: 22px;
  padding-right: 11px;
}

.user-row svg {
  display: block;
  width: 12px;
  height: 12px;
  fill: none;
  stroke: #fff;
}

.avatar {
  width: 18px;
  height: 18px;
  margin: 0 -3px 0 -15px;
  border-radius: 50%;
  background: #d8d8d8;
  color: #666;
  font-size: 8px;
  line-height: 18px;
  text-align: center;
}

.tabs {
  display: flex;
}

.tabs a {
  padding: 0 9px;
  line-height: 23px;
  white-space: nowrap;
}

.tabs .file {
  padding: 0 17px 0 14px;
}

.tabs .active {
  background: #f3f3f3;
  color: #2b579a;
}

.context {
  position: relative;
  background: #234679;
}

.tell-row {
  position: relative;
  display: flex;
  align-items: center;
  gap: 9px;
  padding: 0 17px 0 10px;
}

.tell-row svg {
  width: 12px;
  height: 12px;
  fill: none;
  stroke: #fff;
}

.share {
  display: flex;
  align-items: center;
  gap: 2px;
  margin-left: auto;
}

.ribbon {
  display: flex;
  height: 70px;
  padding: 2px 0 2px 4px;
  background: #f3f3f3;
  border-bottom: 1px solid #d0d0d0;
}

.group {
  display: flex;
  flex-direction: column;
  justify-content: space-between;
  align-items: center;
  border-right: 1px solid #d0d0d0;
}

.group h3 {
  margin: 0;
  font-size: 9px;
  font-weight: normal;
  line-height: 12px;
  color: #444;
}

.items {
  display: flex;
  gap: 1px;
}

.big {
  display: flex;
  flex-direction: column;
  align-items: center;
  min-width: 30px;
  height: 50px;
  padding-top: 3px;
  line-height: 12px;
  text-align: center;
  white-space: nowrap;
}

.big svg {
  width: 24px;
  height: 22px;
  margin-bottom: 2px;
  flex: none;
}

.big .chev {
  width: 6px;
  height: 6px;
  margin: 0;
  fill: none;
  stroke: #555;
}

.big.on {
  background: #c8c8c8;
  outline: 1px solid #aaa;
}

.stack {
  display: flex;
  flex-direction: column;
  gap: 1px;
}

.stack button,
.stack label {
  display: flex;
  align-items: center;
  gap: 3px;
  height: 16px;
  white-space: nowrap;
}

.stack button:disabled {
  color: #aaa;
}

.stack svg {
  width: 12px;
  height: 12px;
  overflow: visible;
}

.stack.ruled {
  padding: 0 8px 0 5px;
  border-left: 1px solid #ddd;
  border-right: 1px solid #ddd;
}

.checks input {
  appearance: none;
  width: 10px;
  height: 10px;
  margin: 0;
  border: 1px solid #888;
  background: #fff;
}

.checks input:checked::before {
  content: "✓";
  display: block;
  font-size: 8px;
  line-height: 8px;
}

.views {
  width: 149px;
}

.views .items {
  gap: 1px;
}

.immersive {
  width: 55px;
}

.movement {
  width: 74px;
}

.show {
  width: 95px;
}

.zoom {
  width: 152px;
}

.zoom .items {
  gap: 2px;
}

.window .items {
  gap: 4px;
}

.window {
  width: 284px;
}

.macros {
  width: 45px;
}

.sharepoint {
  width: 54px;
}

.collapse {
  align-self: flex-end;
  margin-left: auto;
  padding-right: 5px;
}

.collapse svg {
  display: block;
  width: 10px;
  height: 10px;
}

.ruler-row {
  display: flex;
  height: 16px;
}

.tab-stop {
  width: 11px;
  height: 11px;
  margin: 2px 4px 0 2px;
  background: #fff;
  border: 1px solid #ccc;
  font-size: 8px;
  font-weight: bold;
  line-height: 9px;
  text-align: center;
}

#hruler {
  flex: 1;
  min-width: 0;
}

.num {
  font: 8px Roboto, sans-serif;
  fill: #333;
  text-anchor: middle;
}

.doc-area {
  flex: 1;
  display: flex;
  min-height: 0;
}

#vruler {
  flex: none;
  height: 100%;
  margin: 0 5px 0 2px;
}

.page {
  flex: 1;
  overflow: hidden;
  padding: 0 13px 0 61px;
  background: #fff;
  color: #000;
  font-family: "Liberation Sans", sans-serif;
}

.page h1 {
  margin: 0 0 35px;
  padding-right: 14px;
  font-size: 31px;
  line-height: 38px;
  text-align: center;
  text-decoration: underline;
  text-decoration-thickness: 3px;
  text-underline-offset: 3px;
}

.table-wrap {
  position: relative;
}

.move {
  position: absolute;
  left: -11px;
  top: -11px;
  width: 11px;
  height: 11px;
}

table {
  width: 100%;
  table-layout: fixed;
  border-collapse: collapse;
  font-size: 15px;
  line-height: 18px;
}

.c-id {
  width: 65px;
}

.c-desc {
  width: 112px;
}

.c-num {
  width: 66px;
}

th,
td {
  padding: 0;
  border-top: 2px solid #111;
  font-weight: normal;
  text-align: center;
}

th {
  height: 56px;
  vertical-align: top;
  background: #e9e9e9;
}

td {
  height: 68px;
}

.first td {
  height: 82px;
}

.last td {
  height: 109px;
}

.sketch {
  display: block;
  margin: 0 auto;
}

.sketch text {
  font: 14px "Liberation Serif", serif;
  text-anchor: middle;
}

.sketch .small {
  font-size: 12px;
}

.steel {
  fill: none;
  stroke: #5252a4;
}

.steel.thick {
  stroke: #20207a;
  stroke-width: 2;
}

.stirrup {
  fill: none;
  stroke: #5858b4;
  stroke-width: 2;
}

.vscroll {
  display: flex;
  flex-direction: column;
  gap: 3px;
  width: 12px;
  background: #dadada;
}

.vscroll button,
.hscroll button {
  width: 11px;
  height: 11px;
  background: #fff;
  border: 1px solid #bbb;
  font-size: 5px;
  line-height: 8px;
}

.vscroll .thumb {
  width: 11px;
  height: 17px;
  margin-bottom: auto;
  background: #fff;
  border: 1px solid #bbb;
}

.hscroll {
  display: flex;
  align-items: center;
  height: 13px;
  padding: 0 14px 0 18px;
}

.hscroll .track {
  flex: 1;
  height: 11px;
  padding: 0 74px 0 44px;
  background: #dadada;
}

.hscroll .thumb {
  display: block;
  height: 11px;
  background: #fff;
  border: 1px solid #bbb;
}

.word-status {
  display: flex;
  align-items: center;
  gap: 10px;
  height: 16px;
  padding: 0 14px 0 5px;
  background: #f3f3f3;
  white-space: nowrap;
}

.word-status svg {
  display: block;
  width: 12px;
  height: 12px;
}

.access {
  display: flex;
  align-items: center;
}

.view-buttons {
  display: flex;
  height: 100%;
  margin-left: auto;
}

.view-buttons button {
  width: 29px;
  padding: 0 8px;
}

.view-buttons .on {
  background: #c8c8c8;
}

.zoom-ctl {
  display: flex;
  align-items: center;
  gap: 4px;
}

.zoom-ctl input {
  appearance: none;
  width: 74px;
  height: 11px;
  margin: 0;
  background: linear-gradient(#999, #999) center / 100% 1px no-repeat;
}

.zoom-ctl input::-webkit-slider-thumb {
  appearance: none;
  width: 4px;
  height: 9px;
  background: #555;
}
```
FILE: ruler.js
```js
const NS = "http://www.w3.org/2000/svg";
const INCH = 55.2;

function add(svg, tag, attrs, text) {
  const el = document.createElementNS(NS, tag);
  for (const k in attrs) el.setAttribute(k, attrs[k]);
  if (text !== undefined) el.textContent = text;
  svg.appendChild(el);
}

function drawHorizontal() {
  const svg = document.getElementById("hruler");
  const edge = 1068;
  add(svg, "rect", { x: 0, y: 2, width: "100%", height: 9, fill: "#c6c6c6" });
  add(svg, "rect", { x: 64, y: 2, width: edge - 64, height: 9, fill: "#fff" });
  for (let q = -5; q <= 73; q++) {
    const x = Math.round(64 + q * INCH / 4);
    if (q % 4 === 0) {
      if (q !== 0) add(svg, "text", { x: x, y: 10, class: "num" }, Math.abs(q / 4));
    } else {
      const h = q % 2 === 0 ? 4 : 1;
      add(svg, "rect", { x: x, y: 7 - h / 2, width: 1, height: h, fill: "#555" });
    }
  }
  // column boundaries
  [58, 121, 236, 736, 802, 868, 934, 1001, edge - 2].forEach(x =>
    add(svg, "rect", { x: x, y: 4, width: 5, height: 6, fill: "#777" }));
  add(svg, "path", { d: "M244 2h6l-3 4 3 4h-6l3-4zM244 10h6v4h-6z", fill: "#fff", stroke: "#777" });
  add(svg, "path", { d: "M727 12v-3l3-3 3 3v3z", fill: "#fff", stroke: "#777" });
}

function drawVertical() {
  const svg = document.getElementById("vruler");
  add(svg, "rect", { x: 1, y: 0, width: 8, height: "100%", fill: "#fff" });
  for (let q = 1; q < 38; q++) {
    const y = Math.round(-9 + q * INCH / 4);
    if (y < 3) continue;
    if (q % 4 === 0) {
      add(svg, "text", { class: "num", transform: `translate(8 ${y}) rotate(-90)` }, q / 4);
    } else {
      const w = q % 2 === 0 ? 4 : 1;
      add(svg, "rect", { x: 5 - w / 2, y: y, width: w, height: 1, fill: "#555" });
    }
  }
  // row boundaries
  [127, 210, 277, 345, 413].forEach(y =>
    add(svg, "rect", { x: 1, y: y, width: 8, height: 5, fill: "#c6c6c6" }));
}

drawHorizontal();
drawVertical();
```
